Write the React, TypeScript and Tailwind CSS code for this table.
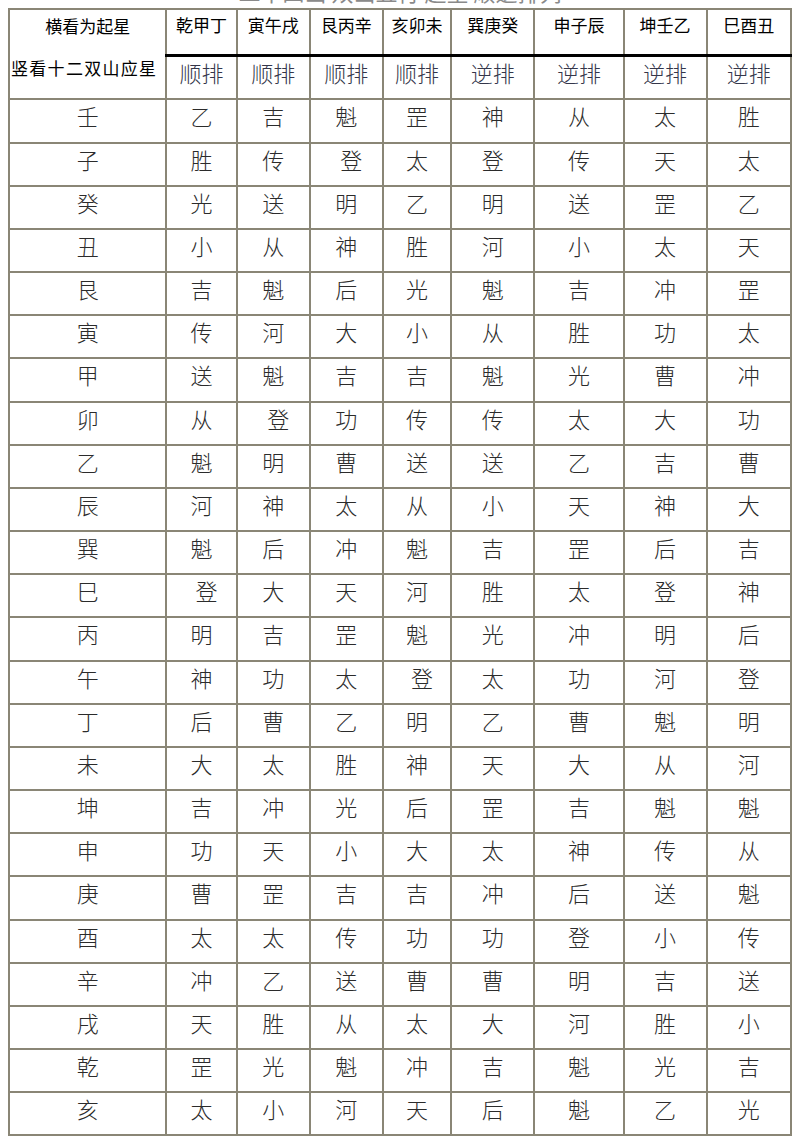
const heads = ["乾甲丁", "寅午戌", "艮丙辛", "亥卯未", "巽庚癸", "申子辰", "坤壬乙", "巳酉丑"];
const order = ["顺排", "顺排", "顺排", "顺排", "逆排", "逆排", "逆排", "逆排"];
const widths = [157, 70, 73, 73, 68, 83, 89, 83, 84];

// "^" marks a cell whose character sits a little right of centre
const rows: [string, string][] = [
  ["壬", "乙 吉 魁 罡 神 从 太 胜"],
  ["子", "胜 传 ^登 太 登 传 天 太"],
  ["癸", "光 送 明 乙 明 送 罡 乙"],
  ["丑", "小 从 神 胜 河 小 太 天"],
  ["艮", "吉 魁 后 光 魁 吉 冲 罡"],
  ["寅", "传 河 大 小 从 胜 功 太"],
  ["甲", "送 魁 吉 吉 魁 光 曹 冲"],
  ["卯", "从 ^登 功 传 传 太 大 功"],
  ["乙", "魁 明 曹 送 送 乙 吉 曹"],
  ["辰", "河 神 太 从 小 天 神 大"],
  ["巽", "魁 后 冲 魁 吉 罡 后 吉"],
  ["巳", "^登 大 天 河 胜 太 登 神"],
  ["丙", "明 吉 罡 魁 光 冲 明 后"],
  ["午", "神 功 太 ^登 太 功 河 登"],
  ["丁", "后 曹 乙 明 乙 曹 魁 明"],
  ["未", "大 太 胜 神 天 大 从 河"],
  ["坤", "吉 冲 光 后 罡 吉 魁 魁"],
  ["申", "功 天 小 大 太 神 传 从"],
  ["庚", "曹 罡 吉 吉 冲 后 送 魁"],
  ["酉", "太 太 传 功 功 登 小 传"],
  ["辛", "冲 乙 送 曹 曹 明 吉 送"],
  ["戌", "天 胜 从 太 大 河 胜 小"],
  ["乾", "罡 光 魁 冲 吉 魁 光 吉"],
  ["亥", "太 小 河 天 后 魁 乙 光"],
];

const sans = "font-['Noto_Sans_CJK_SC',sans-serif]";
const cell = "border-2 border-[#8a8676] p-0 text-center";
const body = `${cell} align-top pt-[2px] text-[22px] leading-[26px] font-light`;

export default function App() {
  return (
    <div className="w-[800px] h-[1144px] bg-white overflow-hidden">
      <div className="h-2 overflow-hidden">
        <p className={`${sans} -mt-[21px] text-center text-[22px] leading-[24px] text-[#8a8a8a]`}>
          二十四山 双山五行 起星 顺逆排列
        </p>
      </div>
      <table
        className={`${sans} ml-[8px] w-[784px] table-fixed border-collapse border-2 border-[#9c9889] text-[#2b2b2b]`}
      >
        <colgroup>
          {widths.map((w, i) => (
            <col key={i} style={{ width: w }} />
          ))}
        </colgroup>
        <thead>
          <tr className="h-[46px]">
            <td rowSpan={2} className={`${cell} align-top text-[17px] leading-[20px] text-black`}>
              <div className="pt-[6px]">横看为起星</div>
              <div className="pt-[22px] whitespace-nowrap text-left pl-[1px] tracking-[1.3px]">竖看十二双山应星</div>
            </td>
            {heads.map((h) => (
              <td
                key={h}
                className={`${cell} border-b-[3px] border-b-black align-top pt-[5px] text-[17px] leading-[20px] text-black`}
              >
                {h}
              </td>
            ))}
          </tr>
          <tr className="h-[44px]">
            {order.map((o, i) => (
              <td key={i} className={`${cell} align-top pt-[2px] text-[22px] leading-[26px] font-light text-[#34364a]`}>
                {o}
              </td>
            ))}
          </tr>
        </thead>
        <tbody>
          {rows.map(([name, line], r) => (
            <tr key={name} className={r % 6 === 0 ? "h-[44px]" : "h-[43px]"}>
              <td className={body}>{name}</td>
              {line.split(" ").map((c, i) => (
                <td key={i} className={body}>
                  {c.startsWith("^") ? <span className="pl-[10px]">{c.slice(1)}</span> : c}
                </td>
              ))}
            </tr>
          ))}
        </tbody>
      </table>
    </div>
  );
}
